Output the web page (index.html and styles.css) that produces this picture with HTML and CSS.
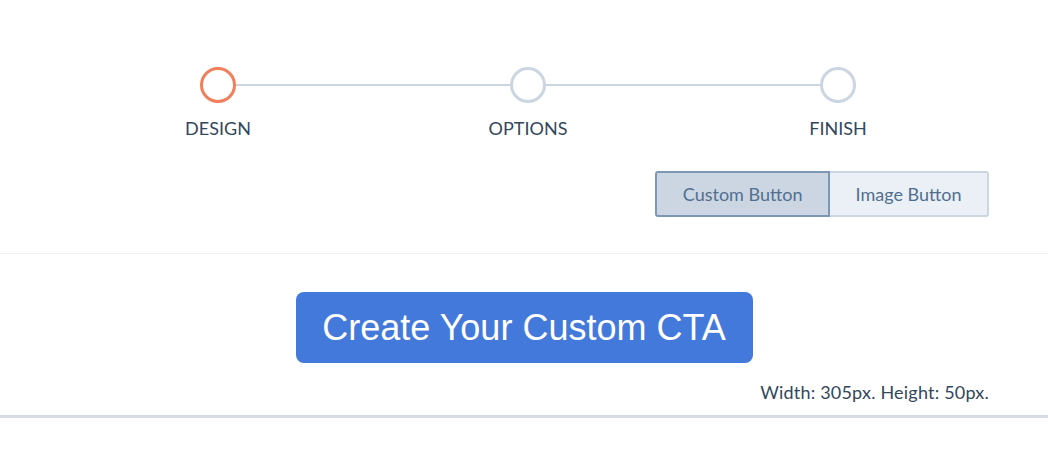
FILE: index.html
```html
<!DOCTYPE html>
<html lang="en">
<head>
<meta charset="utf-8">
<title>Create CTA</title>
<link rel="stylesheet" href="styles.css">
</head>
<body>
<div class="card">
  <section class="top">
    <div class="steps">
      <div class="step">
        <div class="track"><span class="seg seg-none"></span><span class="dot dot-active"></span><span class="seg"></span></div>
        <div class="label">DESIGN</div>
      </div>
      <div class="step">
        <div class="track"><span class="seg"></span><span class="dot"></span><span class="seg"></span></div>
        <div class="label">OPTIONS</div>
      </div>
      <div class="step">
        <div class="track"><span class="seg"></span><span class="dot"></span><span class="seg seg-none"></span></div>
        <div class="label">FINISH</div>
      </div>
    </div>
    <div class="toggle-row">
      <div class="toggle">
        <button class="tbtn tbtn-on">Custom Button</button>
        <button class="tbtn">Image Button</button>
      </div>
    </div>
  </section>
  <section class="preview">
    <div class="cta-row">
      <a class="cta">Create Your Custom CTA</a>
    </div>
    <div class="dims">Width: 305px. Height: 50px.</div>
  </section>
</div>
</body>
</html>
```

FILE: styles.css
```css
html, body {
  margin: 0;
  padding: 0;
  background: #ffffff;
}
body {
  font-family: Lato, "Open Sans", sans-serif;
  color: #33475b;
}
.card {
  width: 1048px;
  border-bottom: 3px solid #d6dde7;
  box-shadow: 0 2px 4px rgba(120, 140, 170, 0.18);
}
.top {
  padding: 67px 59px 36px 0;
  border-bottom: 1px solid #eef1f5;
}
.steps {
  display: grid;
  grid-template-columns: repeat(3, 310px);
  padding-left: 63px;
}
.step {
  display: flex;
  flex-direction: column;
  align-items: stretch;
}
.track {
  display: flex;
  align-items: center;
  height: 36px;
}
.seg {
  flex: 1;
  height: 2px;
  background: #cbd6e2;
}
.seg-none {
  background: transparent;
}
.dot {
  width: 36px;
  height: 36px;
  box-sizing: border-box;
  border: 3px solid #cbd6e2;
  border-radius: 50%;
  background: #ffffff;
}
.dot-active {
  border-color: #f07f5c;
}
.label {
  margin-top: 13px;
  text-align: center;
  font-size: 18px;
  line-height: 24px;
  color: #33475b;
}
.toggle-row {
  display: flex;
  justify-content: flex-end;
  margin-top: 31px;
}
.toggle {
  display: flex;
}
.tbtn {
  height: 46px;
  margin: 0;
  padding: 0 25.5px;
  font-family: Lato, "Open Sans", sans-serif;
  font-size: 18px;
  color: #516f90;
  background: #eaf0f6;
  border: 2px solid #cbd6e2;
  border-left-width: 0;
  border-radius: 0 3px 3px 0;
}
.tbtn-on {
  background: #cbd6e2;
  border: 2px solid #7c98b6;
  border-radius: 3px 0 0 3px;
}
.preview {
  padding: 38px 59px 12px 0;
}
.cta-row {
  display: flex;
  justify-content: center;
  padding-left: 59px;
}
.cta {
  display: flex;
  align-items: center;
  justify-content: center;
  width: 457px;
  height: 71px;
  background: #4479dc;
  color: #ffffff;
  border-radius: 8px;
  font-family: "Liberation Sans", Arial, sans-serif;
  font-size: 36px;
}
.dims {
  margin-top: 18px;
  text-align: right;
  font-size: 18px;
  line-height: 22px;
  letter-spacing: 0.2px;
  color: #33475b;
}
```
